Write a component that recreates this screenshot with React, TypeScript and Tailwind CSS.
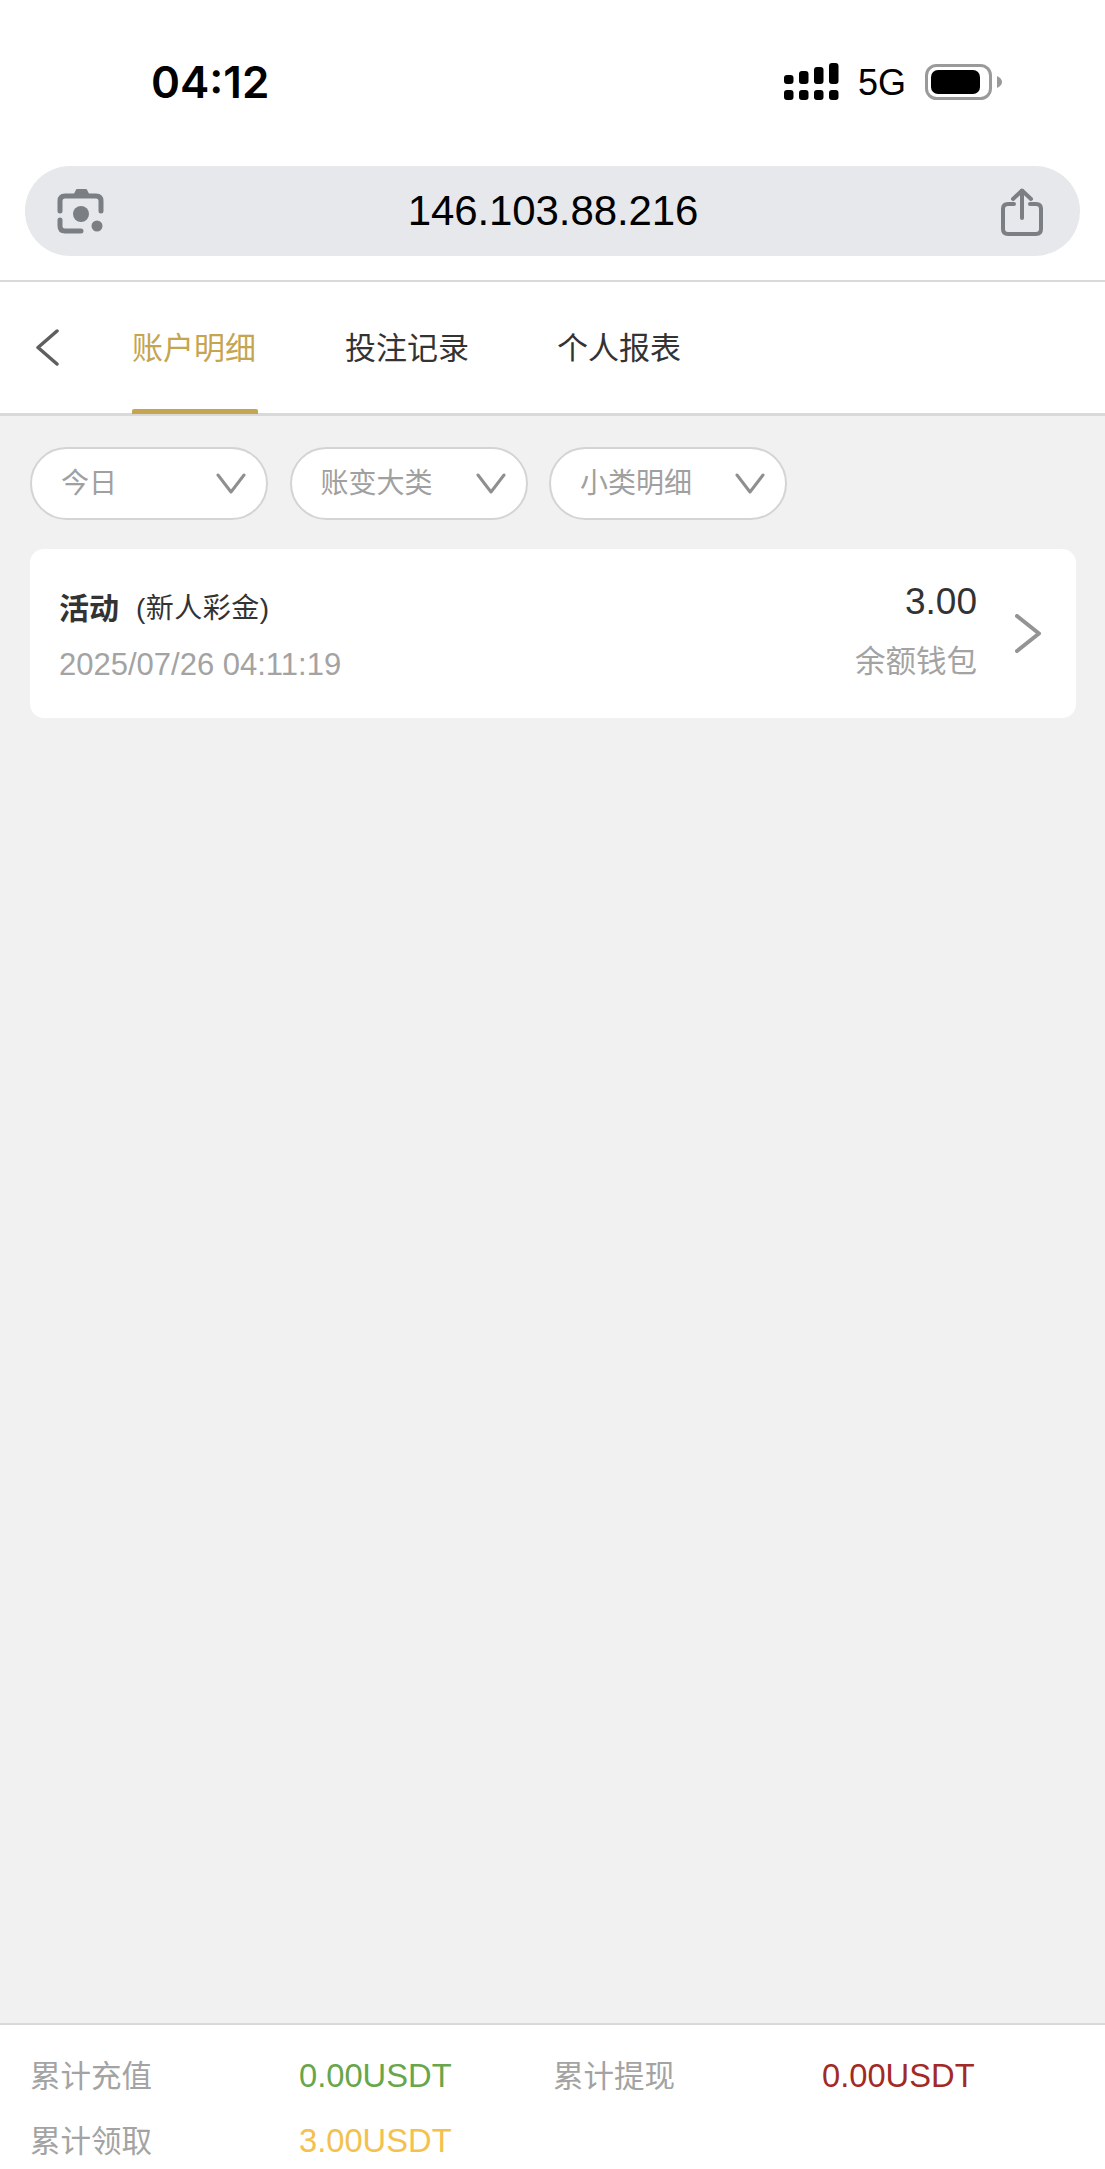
import React from "react";

const FONT = "[font-family:'Liberation_Sans','Noto_Sans_CJK_SC',sans-serif]";

function Signal() {
  const tops = [9, 13, 17, 21];
  return (
    <div className="flex gap-[5.5px] items-end">
      {tops.map((h, i) => (
        <div key={i} className="flex flex-col gap-[6px] items-center">
          <svg width="9.5" height={h} className="block"><rect width="9.5" height={h} rx="3" fill="#000" /></svg>
          <svg width="9.5" height="10" className="block"><rect width="9.5" height="10" rx="3" fill="#000" /></svg>
        </div>
      ))}
    </div>
  );
}

function Battery() {
  return (
    <svg width="78" height="36" viewBox="0 0 78 36" className="block">
      <rect x="1.5" y="1.5" width="64" height="33" rx="10" fill="none" stroke="#9a9a9a" strokeWidth="3" />
      <rect x="6" y="6" width="49" height="24" rx="7" fill="#000" />
      <path d="M72 12 C76 14 77 16 77 18 C77 20 76 22 72 24 Z" fill="#9a9a9a" />
    </svg>
  );
}

function LensIcon() {
  return (
    <svg width="48" height="48" viewBox="0 0 48 48" fill="none" className="block">
      <path d="M17 9 L20 3 H29 L32 9 Z" fill="#7b7e83" stroke="#7b7e83" strokeWidth="2" strokeLinejoin="round" />
      <path d="M3 24 V14 Q3 9 8 9 H39 Q44 9 44 14 V24" stroke="#7b7e83" strokeWidth="5" strokeLinecap="round" />
      <path d="M3 33 V39 Q3 44 8 44 H24" stroke="#7b7e83" strokeWidth="5" strokeLinecap="round" />
      <circle cx="24" cy="27" r="8" fill="#7b7e83" />
      <circle cx="40" cy="39" r="5.5" fill="#7b7e83" />
    </svg>
  );
}

function ShareIcon() {
  return (
    <svg width="42" height="48" viewBox="0 0 42 48" fill="none" stroke="#7b7e83" strokeWidth="4" strokeLinecap="round" strokeLinejoin="round" className="block mt-[2px]">
      <path d="M13 16 H7 Q2 16 2 21 V41 Q2 46 7 46 H35 Q40 46 40 41 V21 Q40 16 35 16 H29" />
      <path d="M21 30 V3" />
      <path d="M12 11 L21 2.5 L30 11" />
    </svg>
  );
}

function Chevron({ dir, color, w, h, sw }: { dir: "left" | "right" | "down"; color: string; w: number; h: number; sw: number }) {
  const d =
    dir === "left"
      ? `M${w - 2} 2 L2 ${h / 2} L${w - 2} ${h - 2}`
      : dir === "right"
      ? `M2 2 L${w - 2} ${h / 2} L2 ${h - 2}`
      : `M2 2 L${w / 2} ${h - 2} L${w - 2} 2`;
  return (
    <svg width={w} height={h} viewBox={`0 0 ${w} ${h}`} fill="none" stroke={color} strokeWidth={sw} strokeLinecap="round" strokeLinejoin="round" className="block">
      <path d={d} />
    </svg>
  );
}

function Pill({ label }: { label: string }) {
  return (
    <div className="w-[238px] h-[73px] rounded-[37px] bg-white border-[2px] border-[#d4d4d4] flex items-center justify-between pl-[29px] pr-[20px]">
      <span className="text-[28px] text-[#a0a0a0] leading-none whitespace-nowrap">{label}</span>
      <Chevron dir="down" color="#8f8f8f" w={30} h={21} sw={3} />
    </div>
  );
}

function Stat({ label, value, color }: { label: string; value: string; color: string }) {
  return (
    <div className="flex items-center w-[523px]">
      <span className="w-[269px] text-[30.5px] leading-none text-[#a3a3a3] whitespace-nowrap">{label}</span>
      <span className={`text-[32.7px] leading-none whitespace-nowrap ${color}`}>{value}</span>
    </div>
  );
}

export default function App() {
  return (
    <div className={`w-[1105px] h-[2169px] flex flex-col overflow-hidden bg-[#f1f1f1] ${FONT}`}>
      {/* iOS chrome */}
      <div className="bg-white h-[282px] shrink-0 border-b-[2px] border-[#d9d9d9] px-[25px]">
        <div className="h-[166px] flex items-start justify-between pl-[126px] pr-[77px]">
          <span className="mt-[56px] text-[44px] leading-[52px] font-semibold text-black [font-family:Inter,sans-serif]">04:12</span>
          <div className="mt-[62px] flex items-center gap-[19px]">
            <Signal />
            <span className="mt-[3px] text-[36px] leading-none text-black">5G</span>
            <Battery />
          </div>
        </div>
        <div className="h-[90px] rounded-[45px] bg-[#e7e8ec] flex items-center justify-between pl-[32px] pr-[37px]">
          <LensIcon />
          <span className="text-[42px] leading-none text-black tracking-[-0.1px]">146.103.88.216</span>
          <ShareIcon />
        </div>
      </div>

      {/* Tabs */}
      <div className="bg-white h-[134px] shrink-0 border-b-[3px] border-[#d9d9d9] flex items-stretch">
        <div className="w-[132px] pl-[36px] flex items-center">
          <Chevron dir="left" color="#5f5f5f" w={23} h={37} sw={3.5} />
        </div>
        <div className="relative w-[126px] flex items-center">
          <span className="mt-[2px] text-[31px] leading-none text-[#c5a54f] whitespace-nowrap">账户明细</span>
          <div className="absolute left-0 right-0 bottom-[-1px] h-[5px] bg-[#c5a54f] rounded-t-[2px]" />
        </div>
        <div className="ml-[87px] flex items-center">
          <span className="mt-[2px] text-[31px] leading-none text-[#333333] whitespace-nowrap">投注记录</span>
        </div>
        <div className="ml-[88px] flex items-center">
          <span className="mt-[2px] text-[31px] leading-none text-[#333333] whitespace-nowrap">个人报表</span>
        </div>
      </div>

      {/* Content */}
      <div className="flex-1 px-[30px] pt-[31px]">
        <div className="flex gap-[21.5px]">
          <Pill label="今日" />
          <Pill label="账变大类" />
          <Pill label="小类明细" />
        </div>
        <div className="mt-[29px] h-[169px] w-[1046px] rounded-[14px] bg-white flex items-center pl-[29px] pr-[35px]">
          <div className="flex-1 flex flex-col gap-[25px] mt-[6px]">
            <div className="flex items-center">
              <span className="text-[30px] leading-none font-bold text-[#333333]">活动</span>
              <span className="ml-[17px] text-[28px] leading-none tracking-[0.5px] text-[#333333]">(新人彩金)</span>
            </div>
            <span className="text-[31px] leading-none text-[#a3a3a3]">2025/07/26 04:11:19</span>
          </div>
          <div className="flex flex-col items-end gap-[26px] mb-[8px] mr-[38px]">
            <span className="text-[37px] leading-none text-[#333333]">3.00</span>
            <span className="text-[30.5px] leading-none text-[#a3a3a3]">余额钱包</span>
          </div>
          <Chevron dir="right" color="#949494" w={26} h={39} sw={4} />
        </div>
      </div>

      {/* Footer */}
      <div className="bg-white h-[146px] shrink-0 border-t-[2px] border-[#d9d9d9] pl-[30px] pt-[35px] flex flex-col gap-[32px]">
        <div className="flex">
          <Stat label="累计充值" value="0.00USDT" color="text-[#67a64a]" />
          <Stat label="累计提现" value="0.00USDT" color="text-[#a32a24]" />
        </div>
        <div className="flex">
          <Stat label="累计领取" value="3.00USDT" color="text-[#f2c14e]" />
        </div>
      </div>
    </div>
  );
}
